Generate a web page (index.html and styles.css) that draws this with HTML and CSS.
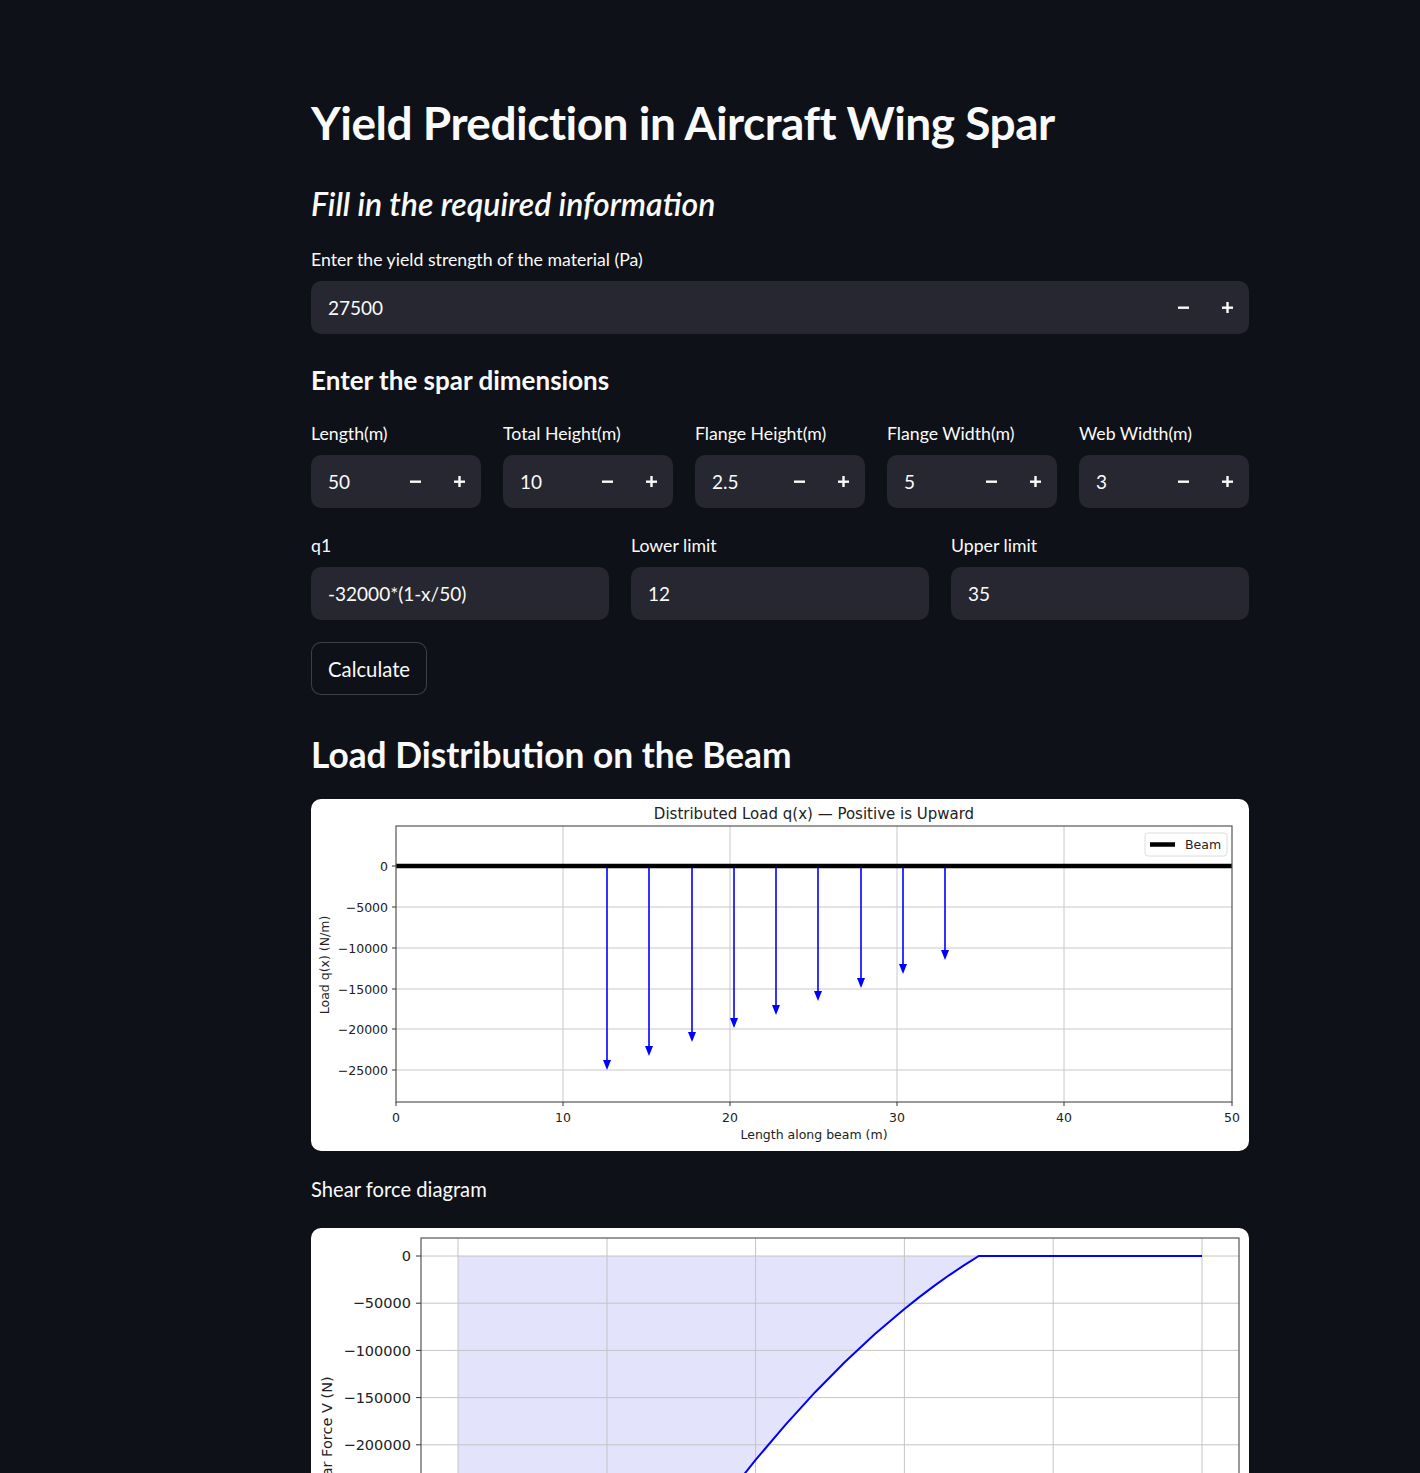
FILE: index.html
```html
<!DOCTYPE html>
<html lang="en">
<head>
    <meta charset="UTF-8">
    <meta name="viewport" content="width=device-width, initial-scale=1.0">
    <title>Yield Prediction in Aircraft Wing Spar</title>
    <link rel="stylesheet" href="styles.css">
</head>
<body>

<main class="main">

    <h1 class="title">Yield Prediction in Aircraft Wing Spar</h1>
    <h3 class="subheader"><em>Fill in the required information</em></h3>

    <!-- Yield strength -->
    <div class="field">
        <label class="field-label">Enter the yield strength of the material (Pa)</label>
        <div class="input-box">
            <span class="input-value">27500</span>
            <button class="step"><svg width="11" height="11" viewBox="0 0 11 11"><rect x="0" y="4.5" width="11" height="2.4" fill="#fafafa"/></svg></button>
            <button class="step"><svg width="11" height="11" viewBox="0 0 11 11"><rect x="0" y="4.5" width="11" height="2.4" fill="#fafafa"/><rect x="4.3" y="0" width="2.4" height="11" fill="#fafafa"/></svg></button>
        </div>
    </div>

    <h4 class="section">Enter the spar dimensions</h4>

    <!-- Dimensions -->
    <div class="row row-five">
        <div class="field">
            <label class="field-label">Length(m)</label>
            <div class="input-box">
                <span class="input-value">50</span>
                <button class="step"><svg width="11" height="11" viewBox="0 0 11 11"><rect x="0" y="4.5" width="11" height="2.4" fill="#fafafa"/></svg></button>
                <button class="step"><svg width="11" height="11" viewBox="0 0 11 11"><rect x="0" y="4.5" width="11" height="2.4" fill="#fafafa"/><rect x="4.3" y="0" width="2.4" height="11" fill="#fafafa"/></svg></button>
            </div>
        </div>
        <div class="field">
            <label class="field-label">Total Height(m)</label>
            <div class="input-box">
                <span class="input-value">10</span>
                <button class="step"><svg width="11" height="11" viewBox="0 0 11 11"><rect x="0" y="4.5" width="11" height="2.4" fill="#fafafa"/></svg></button>
                <button class="step"><svg width="11" height="11" viewBox="0 0 11 11"><rect x="0" y="4.5" width="11" height="2.4" fill="#fafafa"/><rect x="4.3" y="0" width="2.4" height="11" fill="#fafafa"/></svg></button>
            </div>
        </div>
        <div class="field">
            <label class="field-label">Flange Height(m)</label>
            <div class="input-box">
                <span class="input-value">2.5</span>
                <button class="step"><svg width="11" height="11" viewBox="0 0 11 11"><rect x="0" y="4.5" width="11" height="2.4" fill="#fafafa"/></svg></button>
                <button class="step"><svg width="11" height="11" viewBox="0 0 11 11"><rect x="0" y="4.5" width="11" height="2.4" fill="#fafafa"/><rect x="4.3" y="0" width="2.4" height="11" fill="#fafafa"/></svg></button>
            </div>
        </div>
        <div class="field">
            <label class="field-label">Flange Width(m)</label>
            <div class="input-box">
                <span class="input-value">5</span>
                <button class="step"><svg width="11" height="11" viewBox="0 0 11 11"><rect x="0" y="4.5" width="11" height="2.4" fill="#fafafa"/></svg></button>
                <button class="step"><svg width="11" height="11" viewBox="0 0 11 11"><rect x="0" y="4.5" width="11" height="2.4" fill="#fafafa"/><rect x="4.3" y="0" width="2.4" height="11" fill="#fafafa"/></svg></button>
            </div>
        </div>
        <div class="field">
            <label class="field-label">Web Width(m)</label>
            <div class="input-box">
                <span class="input-value">3</span>
                <button class="step"><svg width="11" height="11" viewBox="0 0 11 11"><rect x="0" y="4.5" width="11" height="2.4" fill="#fafafa"/></svg></button>
                <button class="step"><svg width="11" height="11" viewBox="0 0 11 11"><rect x="0" y="4.5" width="11" height="2.4" fill="#fafafa"/><rect x="4.3" y="0" width="2.4" height="11" fill="#fafafa"/></svg></button>
            </div>
        </div>
    </div>

    <!-- Load function and limits -->
    <div class="row row-three">
        <div class="field">
            <label class="field-label">q1</label>
            <div class="input-box"><span class="input-value">-32000*(1-x/50)</span></div>
        </div>
        <div class="field">
            <label class="field-label">Lower limit</label>
            <div class="input-box"><span class="input-value">12</span></div>
        </div>
        <div class="field">
            <label class="field-label">Upper limit</label>
            <div class="input-box"><span class="input-value">35</span></div>
        </div>
    </div>

    <button class="btn">Calculate</button>

    <h2 class="heading">Load Distribution on the Beam</h2>

    <!-- Load plot -->
    <div class="chart">
        <svg class="plot" width="938" height="352" viewBox="0 0 938 352">
            <g stroke="#c8c8c8" stroke-width="1">
                <line x1="252" y1="27" x2="252" y2="303"/>
                <line x1="419" y1="27" x2="419" y2="303"/>
                <line x1="586" y1="27" x2="586" y2="303"/>
                <line x1="753" y1="27" x2="753" y2="303"/>
                <line x1="85" y1="108" x2="921" y2="108"/>
                <line x1="85" y1="149" x2="921" y2="149"/>
                <line x1="85" y1="190" x2="921" y2="190"/>
                <line x1="85" y1="230" x2="921" y2="230"/>
                <line x1="85" y1="271" x2="921" y2="271"/>
            </g>
            <line x1="85" y1="67" x2="921" y2="67" stroke="#000" stroke-width="4.5"/>
            <g stroke="#0000ff" stroke-width="1.6">
                <line x1="296" y1="69" x2="296" y2="263"/>
                <line x1="338" y1="69" x2="338" y2="249"/>
                <line x1="381" y1="69" x2="381" y2="235"/>
                <line x1="423" y1="69" x2="423" y2="221"/>
                <line x1="465" y1="69" x2="465" y2="208"/>
                <line x1="507" y1="69" x2="507" y2="194"/>
                <line x1="550" y1="69" x2="550" y2="181"/>
                <line x1="592" y1="69" x2="592" y2="167"/>
                <line x1="634" y1="69" x2="634" y2="153"/>
            </g>
            <g fill="#0000ff">
                <polygon points="292,261 300,261 296,271"/>
                <polygon points="334,247 342,247 338,257"/>
                <polygon points="377,233 385,233 381,243"/>
                <polygon points="419,219 427,219 423,229"/>
                <polygon points="461,206 469,206 465,216"/>
                <polygon points="503,192 511,192 507,202"/>
                <polygon points="546,179 554,179 550,189"/>
                <polygon points="588,165 596,165 592,175"/>
                <polygon points="630,151 638,151 634,161"/>
            </g>
            <rect x="85" y="27" width="836" height="276" fill="none" stroke="#555" stroke-width="1.2"/>
            <g stroke="#333" stroke-width="1">
                <line x1="81" y1="67" x2="85" y2="67"/>
                <line x1="81" y1="108" x2="85" y2="108"/>
                <line x1="81" y1="149" x2="85" y2="149"/>
                <line x1="81" y1="190" x2="85" y2="190"/>
                <line x1="81" y1="230" x2="85" y2="230"/>
                <line x1="81" y1="271" x2="85" y2="271"/>
                <line x1="85" y1="303" x2="85" y2="307"/>
                <line x1="252" y1="303" x2="252" y2="307"/>
                <line x1="419" y1="303" x2="419" y2="307"/>
                <line x1="586" y1="303" x2="586" y2="307"/>
                <line x1="753" y1="303" x2="753" y2="307"/>
                <line x1="921" y1="303" x2="921" y2="307"/>
            </g>
            <g class="tick" text-anchor="end">
                <text x="77" y="72">0</text>
                <text x="77" y="113">−5000</text>
                <text x="77" y="154">−10000</text>
                <text x="77" y="195">−15000</text>
                <text x="77" y="235">−20000</text>
                <text x="77" y="276">−25000</text>
            </g>
            <g class="tick" text-anchor="middle">
                <text x="85" y="323">0</text>
                <text x="252" y="323">10</text>
                <text x="419" y="323">20</text>
                <text x="586" y="323">30</text>
                <text x="753" y="323">40</text>
                <text x="921" y="323">50</text>
            </g>
            <text class="plot-title" x="503" y="20" text-anchor="middle">Distributed Load q(x) — Positive is Upward</text>
            <text class="tick" x="503" y="340" text-anchor="middle">Length along beam (m)</text>
            <text class="tick" transform="translate(18,166) rotate(-90)" text-anchor="middle">Load q(x) (N/m)</text>
            <rect x="834" y="34" width="82" height="23" rx="3" fill="#fff" stroke="#ddd"/>
            <line x1="839" y1="45.5" x2="864" y2="45.5" stroke="#000" stroke-width="4.5"/>
            <text class="legend" x="874" y="50">Beam</text>
        </svg>
    </div>

    <p class="caption">Shear force diagram</p>

    <!-- Shear force plot -->
    <div class="chart">
        <svg class="plot" width="938" height="470" viewBox="0 0 938 470">
            <polygon fill="#e3e3fb" points="147,28 667.8,28 652.9,37.4 638,47.3 623.2,57.9 608.3,69.1 593.4,80.9 563.6,106.2 533.9,134 504.1,164.2 474.4,196.9 444.6,231.9 414.8,269.4 385.1,309.2 355.3,351.5 325.6,396.2 147,396.2"/>
            <g stroke="#c4c4c4" stroke-width="1">
                <line x1="147" y1="10" x2="147" y2="415"/>
                <line x1="296" y1="10" x2="296" y2="415"/>
                <line x1="444.6" y1="10" x2="444.6" y2="415"/>
                <line x1="593.4" y1="10" x2="593.4" y2="415"/>
                <line x1="742.2" y1="10" x2="742.2" y2="415"/>
                <line x1="891" y1="10" x2="891" y2="415"/>
                <line x1="110" y1="28" x2="928" y2="28"/>
                <line x1="110" y1="75.2" x2="928" y2="75.2"/>
                <line x1="110" y1="122.4" x2="928" y2="122.4"/>
                <line x1="110" y1="169.6" x2="928" y2="169.6"/>
                <line x1="110" y1="216.8" x2="928" y2="216.8"/>
                <line x1="110" y1="264" x2="928" y2="264"/>
                <line x1="110" y1="311.2" x2="928" y2="311.2"/>
                <line x1="110" y1="358.4" x2="928" y2="358.4"/>
                <line x1="110" y1="405.6" x2="928" y2="405.6"/>
            </g>
            <polyline fill="none" stroke="#0000ff" stroke-width="2" points="147,396.2 325.6,396.2 355.3,351.5 385.1,309.2 414.8,269.4 444.6,231.9 474.4,196.9 504.1,164.2 533.9,134 563.6,106.2 593.4,80.9 608.3,69.1 623.2,57.9 638,47.3 652.9,37.4 667.8,28 891,28"/>
            <rect x="110" y="10" width="818" height="405" fill="none" stroke="#555" stroke-width="1.2"/>
            <g stroke="#333" stroke-width="1">
                <line x1="105" y1="28" x2="110" y2="28"/>
                <line x1="105" y1="75.2" x2="110" y2="75.2"/>
                <line x1="105" y1="122.4" x2="110" y2="122.4"/>
                <line x1="105" y1="169.6" x2="110" y2="169.6"/>
                <line x1="105" y1="216.8" x2="110" y2="216.8"/>
                <line x1="105" y1="264" x2="110" y2="264"/>
                <line x1="105" y1="311.2" x2="110" y2="311.2"/>
                <line x1="105" y1="358.4" x2="110" y2="358.4"/>
                <line x1="105" y1="405.6" x2="110" y2="405.6"/>
            </g>
            <g class="tick-lg" text-anchor="end">
                <text x="100" y="33">0</text>
                <text x="100" y="80">−50000</text>
                <text x="100" y="128">−100000</text>
                <text x="100" y="175">−150000</text>
                <text x="100" y="222">−200000</text>
                <text x="100" y="269">−250000</text>
                <text x="100" y="316">−300000</text>
                <text x="100" y="364">−350000</text>
                <text x="100" y="411">−400000</text>
            </g>
            <g class="tick-lg" text-anchor="middle">
                <text x="147" y="434">0</text>
                <text x="296" y="434">10</text>
                <text x="444.6" y="434">20</text>
                <text x="593.4" y="434">30</text>
                <text x="742.2" y="434">40</text>
                <text x="891" y="434">50</text>
            </g>
            <text class="tick-lg" x="519" y="456" text-anchor="middle">Length along beam (m)</text>
            <text class="tick-lg" transform="translate(21,212) rotate(-90)" text-anchor="middle">Shear Force V (N)</text>
        </svg>
    </div>

</main>

</body>
</html>
```

FILE: styles.css
```css
* {
    box-sizing: border-box;
    margin: 0;
    padding: 0;
}

body {
    background-color: #0e1117;
    color: #fafafa;
    font-family: Lato, "Noto Sans", sans-serif;
}

.main {
    width: 938px;
    margin-left: 311px;
    padding-top: 92px;
    padding-bottom: 60px;
    display: flex;
    flex-direction: column;
    align-items: flex-start;
}

/* Headings */
.title {
    font-size: 46px;
    font-weight: 700;
    line-height: 62px;
    letter-spacing: -0.5px;
}

.subheader {
    margin-top: 28px;
    font-size: 32px;
    font-weight: 600;
    line-height: 43px;
}

.section {
    margin-top: 30px;
    font-size: 26px;
    font-weight: 700;
    line-height: 32px;
}

.heading {
    margin-top: 36px;
    font-size: 35.3px;
    font-weight: 700;
    line-height: 48px;
}

.caption {
    margin-top: 21px;
    font-size: 20.2px;
    line-height: 34px;
}

/* Inputs */
.field {
    width: 100%;
    margin-top: 20px;
    display: flex;
    flex-direction: column;
    gap: 7px;
}

.row .field {
    margin-top: 0;
}

.field-label {
    font-size: 17.7px;
    line-height: 29px;
}

.input-box {
    height: 53px;
    background: #262730;
    border-radius: 10px;
    display: flex;
    align-items: center;
}

.input-value {
    flex: 1;
    padding-left: 17px;
    font-size: 19px;
}

.step {
    width: 43.5px;
    height: 53px;
    background: none;
    border: none;
    display: flex;
    align-items: center;
    justify-content: center;
}

.row {
    width: 100%;
    display: grid;
    gap: 22px;
}

.row-five {
    grid-template-columns: repeat(5, 1fr);
    margin-top: 23px;
}

.row-three {
    grid-template-columns: repeat(3, 1fr);
    margin-top: 23px;
}

.btn {
    margin-top: 22px;
    height: 53px;
    padding: 0 16px;
    background: #0e1117;
    color: #fafafa;
    border: 1px solid rgba(250, 250, 250, 0.2);
    border-radius: 10px;
    font-family: Lato, "Noto Sans", sans-serif;
    font-size: 20.3px;
}

/* Charts */
.chart {
    margin-top: 20px;
    width: 938px;
    background: #fff;
    border-radius: 10px;
    overflow: hidden;
}

.caption + .chart {
    margin-top: 22px;
}

.plot {
    display: block;
    font-family: "DejaVu Sans", sans-serif;
}

.tick {
    font-size: 12.5px;
    fill: #222;
}

.tick-lg {
    font-size: 14.5px;
    fill: #222;
}

.plot-title {
    font-size: 15px;
    fill: #222;
}

.legend {
    font-size: 12.5px;
    fill: #222;
}
```
